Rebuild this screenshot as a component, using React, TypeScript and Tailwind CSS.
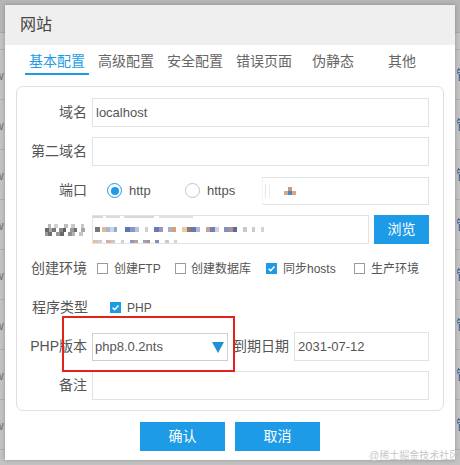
import React from "react";

type Block = [number, string];

const tabs = ["基本配置", "高级配置", "安全配置", "错误页面", "伪静态", "其他"];

const labelMosaic: Block[][] = [
  [[3, ""], [3, "#b8b8b8"], [3, ""], [4, "#d0d0d0"], [6, ""], [4, "#bcbcbc"], [3, ""], [4, "#c8c8c8"], [6, ""], [3, "#c8c8c8"]],
  [[4, "#6a6a6a"], [3, "#a8a8a8"], [4, "#777777"], [3, ""], [4, "#8a8a8a"], [3, "#5f5f5f"], [4, ""], [4, "#9a9a9a"], [3, "#6f6f6f"], [4, ""], [4, "#a8a8a8"]],
  [[3, "#9a9a9a"], [4, "#707070"], [4, ""], [4, "#999999"], [4, "#6a6a6a"], [4, ""], [4, "#8f8f8f"], [3, "#b4b4b4"], [4, ""], [4, "#c4c4c4"]],
];

const pathTop: Block[] = [
  [10, "#d6d6d6"], [3, ""], [14, "#dcdcdc"], [4, ""], [30, "#d9d9d9"], [5, ""], [34, "#e0e0e0"],
];

const pathMid: Block[] = [
  [5, "#777777"], [2, ""], [4, "#e3bb92"], [4, "#a8b8d8"], [4, "#ccd4ea"], [3, "#9aa8c8"], [8, ""],
  [5, "#5a78b8"], [5, "#8898c0"], [4, "#b8c4dc"], [6, ""], [3, "#cfcfcf"], [6, ""], [5, "#6a7ab0"],
  [4, "#9a9ab0"], [5, ""], [4, "#a8b0d0"], [4, "#d8a070"], [6, ""], [5, "#ecc9a0"], [4, "#8a7a70"],
  [5, "#6878a8"], [4, "#b0b8d0"], [6, ""], [4, "#c4a0a0"], [5, "#7080b0"], [4, "#d0d0e0"], [5, ""],
  [5, "#8090c0"], [4, "#b09090"], [4, "#5a6a9a"], [6, ""], [4, "#c8c8c8"], [5, ""], [3, "#cccccc"],
  [6, ""], [3, "#d4d4d4"],
];

const pathBottom: Block[] = [
  [5, "#e2c2a2"], [4, "#c8cce0"], [4, ""], [5, "#d8b0a0"], [4, "#c0c8dc"], [6, ""], [3, "#d0d0d0"],
  [6, ""], [4, "#8898c8"], [4, "#c0a090"], [5, ""], [4, "#9aa0c0"], [3, "#b09080"], [5, ""], [4, "#8090b8"],
  [6, ""], [4, "#c8c8d8"], [5, ""], [3, "#d4d4d4"],
];

const MosaicRow: React.FC<{ blocks: Block[]; h: number }> = ({ blocks, h }) => (
  <div className="flex">
    {blocks.map(([w, c], i) => (
      <span key={i} style={{ width: w, height: h, background: c || "transparent" }} />
    ))}
  </div>
);

const Checkbox: React.FC<{ checked?: boolean }> = ({ checked }) =>
  checked ? (
    <span className="w-[11px] h-[11px] bg-[#1e9be6] flex items-center justify-center shrink-0">
      <svg width="9" height="9" viewBox="0 0 10 10">
        <path d="M1.8 5.2 L4.1 7.4 L8.3 2.8" fill="none" stroke="white" strokeWidth="1.7" />
      </svg>
    </span>
  ) : (
    <span className="w-[11px] h-[11px] border border-[#9a9a9a] bg-white shrink-0" />
  );

const Radio: React.FC<{ checked?: boolean }> = ({ checked }) =>
  checked ? (
    <span className="w-[15px] h-[15px] rounded-full border border-[#1e9be6] bg-white flex items-center justify-center shrink-0">
      <span className="w-[8px] h-[8px] rounded-full bg-[#1e9be6]" />
    </span>
  ) : (
    <span className="w-[15px] h-[15px] rounded-full border border-[#c4c4c4] bg-white shrink-0" />
  );

const Row: React.FC<{ label?: React.ReactNode; children: React.ReactNode }> = ({ label, children }) => (
  <div className="flex items-center h-[29px]">
    <div className="w-[70px] shrink-0 flex justify-end text-[14px] text-[#555]">{label}</div>
    <div className="ml-[5px] flex-1 flex items-center h-full">{children}</div>
  </div>
);

const Input: React.FC<{ value?: string; className?: string }> = ({ value, className }) => (
  <div
    className={`h-[29px] border border-[#e2e2e2] bg-white flex items-center pl-[3px] text-[13px] text-[#555] ${className ?? "flex-1"}`}
  >
    {value}
  </div>
);

const Backdrop = () => (
  <div className="flex flex-col">
    <div className="h-[33px] bg-[#b6b6b6] border-b border-[#a9a9a9]" />
    <div className="h-[17px] border-b border-[#b0b0b0]" />
    {Array.from({ length: 9 }).map((_, i) => (
      <div key={i} className="h-[50px] border-b border-[#b0b0b0] flex items-center whitespace-nowrap">
        <div className="w-[456px] shrink-0">
          <span className="ml-[-5px] text-[12px] text-[#707070]">w</span>
        </div>
        <span className="text-[13px] text-[#2a64a0]">管理</span>
      </div>
    ))}
  </div>
);

export default function App() {
  return (
    <div className="relative w-[460px] h-[465px] overflow-hidden bg-[#c3c3c3] font-['Liberation_Sans','Noto_Sans_CJK_SC',sans-serif]">
      <Backdrop />

      <div className="absolute left-[5px] top-[5px] w-[450px] h-[455px] bg-white flex flex-col shadow-[0_0_4px_rgba(0,0,0,0.25)]">
        <div className="h-[40px] bg-[#efefef] flex items-center pl-[15px] text-[16px] text-[#444]">网站</div>

        <div className="flex pl-[20px] gap-[5px] h-[30px]">
          {tabs.map((t, i) => (
            <div
              key={t}
              className={`w-[64px] h-[30px] pt-[5px] flex items-center justify-center text-[14px] border-b-2 ${
                i === 0 ? "border-[#1e9be6] text-[#1e9be6]" : "border-transparent text-[#666]"
              }`}
            >
              {t}
            </div>
          ))}
        </div>

        <div className="mx-[11px] mt-[11px] border border-[#e0e0e0] rounded-[7px] pt-[11px] pb-[10px] pr-[14px] flex flex-col gap-[10px]">
          <Row label="域名">
            <Input value="localhost" />
          </Row>
          <Row label="第二域名">
            <Input />
          </Row>
          <Row label="端口">
            <span className="ml-[15px]">
              <Radio checked />
            </span>
            <span className="ml-[7px] w-[56px] text-[13px] text-[#555]">http</span>
            <Radio />
            <span className="ml-[7px] w-[55px] text-[13px] text-[#555]">https</span>
            <div className="flex-1 h-[28px] border border-[#e2e2e2] border-l-[#f4f4f4] flex items-center pl-[2px]">
              <span className="w-[1px] h-[14px] bg-[#e4e4e4]" />
              <span className="ml-[3px] w-[1px] h-[14px] bg-[#ececec]" />
              <span className="ml-[14px] flex flex-col items-center">
                <span className="w-[4px] h-[4px] bg-[#d09a70]" />
                <span className="flex">
                  <span className="w-[4px] h-[4px] bg-[#d8a880]" />
                  <span className="w-[4px] h-[4px] bg-[#4a88c8]" />
                  <span className="w-[4px] h-[4px] bg-[#d8a880]" />
                </span>
              </span>
            </div>
          </Row>
          <Row
            label={
              <div className="mr-[2px] flex flex-col">
                {labelMosaic.map((r, i) => (
                  <MosaicRow key={i} blocks={r} h={4} />
                ))}
              </div>
            }
          >
            <div className="flex-1 h-[29px] border border-[#e2e2e2] flex flex-col justify-between">
              <MosaicRow blocks={pathTop} h={2} />
              <div className="pl-[2px]">
                <MosaicRow blocks={pathMid} h={5} />
              </div>
              <MosaicRow blocks={pathBottom} h={3} />
            </div>
            <button className="ml-[5px] w-[55px] h-[29px] bg-[#1e9be6] text-white text-[14px]">浏览</button>
          </Row>
          <Row label="创建环境">
            <div className="ml-[5px] w-[78px] flex items-center gap-[6px] text-[12px] text-[#555]">
              <Checkbox />
              <span>创建FTP</span>
            </div>
            <div className="w-[91px] flex items-center gap-[5px] text-[12px] text-[#555]">
              <Checkbox />
              <span>创建数据库</span>
            </div>
            <div className="w-[88px] flex items-center gap-[6px] text-[12px] text-[#555]">
              <Checkbox checked />
              <span>同步hosts</span>
            </div>
            <div className="flex items-center gap-[6px] text-[12px] text-[#555]">
              <Checkbox />
              <span>生产环境</span>
            </div>
          </Row>
          <Row label={<span className="mr-[-1px]">程序类型</span>}>
            <span className="ml-[18px]">
              <Checkbox checked />
            </span>
            <span className="ml-[6px] text-[12px] text-[#555]">PHP</span>
          </Row>
          <Row label="PHP版本">
            <div className="w-[136px] h-[28px] border border-[#cfcfcf] flex items-center justify-between pl-[2px] pr-[3px] text-[13px] text-[#555]">
              <span>php8.0.2nts</span>
              <svg width="12" height="12" viewBox="0 0 12 12">
                <path d="M0 1 L12 1 L6 12 Z" fill="#1e8fd8" />
              </svg>
            </div>
            <div className="w-[66px] text-center text-[14px] text-[#555]">到期日期</div>
            <Input value="2031-07-12" />
          </Row>
          <Row label="备注">
            <Input />
          </Row>
        </div>

        <div className="flex justify-center gap-[10px] mt-[11px]">
          <button className="w-[85px] h-[29px] bg-[#1e9be6] text-white text-[14px]">确认</button>
          <button className="w-[85px] h-[29px] bg-[#1e9be6] text-white text-[14px]">取消</button>
        </div>

        <div className="absolute left-[57px] top-[311px] w-[173px] h-[56px] border-2 border-[#e3221d]" />
      </div>

      <div className="absolute left-[369px] top-[448px] text-[10px] text-[#c9c9c9] whitespace-nowrap">
        @稀土掘金技术社区
      </div>
    </div>
  );
}
